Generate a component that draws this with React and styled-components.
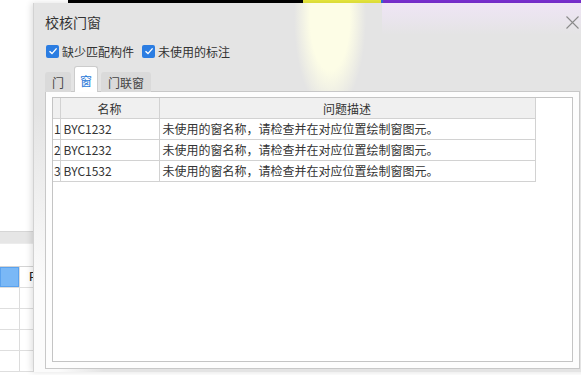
import styled, { createGlobalStyle } from "styled-components";

const GlobalStyle = createGlobalStyle`
  html, body {
    margin: 0;
    padding: 0;
    background: #ffffff;
  }
  body {
    font-family: "Noto Sans CJK SC", "Noto Sans", sans-serif;
    color: #333;
  }
`;

const Desktop = styled.div`
  position: relative;
  width: 581px;
  height: 375px;
  overflow: hidden;
  background: #fff;
`;

// 背景中的应用程序（被对话框遮住）
const TopStrip = styled.div`
  display: flex;
  height: 3px;
`;

const StripPart = styled.div`
  width: ${(p) => p.w}px;
  flex: ${(p) => (p.w ? "none" : 1)};
  background: ${(p) => p.color};
`;

const BgApp = styled.div`
  margin-top: 228px;
  border-top: 1px solid #d6d6d6;
`;

const BgBand = styled.div`
  height: 11px;
  background: #e6e6e6;
  border-bottom: 1px solid #ececec;
`;

const BgBlank = styled.div`
  height: 22px;
  border-bottom: 1px solid #d4d4d4;
`;

const BgRow = styled.div`
  display: grid;
  grid-template-columns: 20px 1fr;
  height: 20px;
  border-bottom: 1px solid #dedede;
`;

const BgCell = styled.div`
  border-right: 1px solid #dcdcdc;
  background: ${(p) => (p.selected ? "#7ab8f6" : "transparent")};
  box-shadow: ${(p) => (p.selected ? "inset 0 0 0 1px #5aa2ee" : "none")};
  font-family: "Liberation Sans", sans-serif;
  font-size: 13px;
  line-height: 20px;
  padding-left: 9px;
  color: #222;
`;

// 对话框
const Dialog = styled.div`
  position: absolute;
  left: 33px;
  top: 3px;
  width: 558px;
  height: 369px;
  display: flex;
  flex-direction: column;
  border-left: 1px solid #d2d2d2;
  box-shadow: -2px 0 6px rgba(0, 0, 0, 0.12);
  background:
    radial-gradient(ellipse 36px 95px at 296px 15px, #fdfde6 55%, rgba(253, 253, 230, 0) 100%),
    linear-gradient(to bottom, #efe5f6, rgba(239, 229, 246, 0)) 348px 0 / 100% 32px no-repeat,
    radial-gradient(ellipse 70px 260px at 0 100%, #fbfbfb 35%, rgba(251, 251, 251, 0) 100%),
    #e4e4e4;
`;

const TitleBar = styled.div`
  height: 38px;
  display: flex;
  align-items: center;
  justify-content: space-between;
  padding: 0 13px 0 11px;
  flex: none;
`;

const Title = styled.span`
  font-size: 14px;
  color: #333;
`;

const CloseButton = styled.button`
  width: 13px;
  height: 13px;
  padding: 0;
  border: none;
  background: none;
  display: flex;
  cursor: pointer;
`;

const CheckRow = styled.div`
  height: 20px;
  display: flex;
  align-items: center;
  gap: 8px;
  padding-left: 12px;
  flex: none;
`;

const CheckLabel = styled.label`
  display: flex;
  align-items: center;
  gap: 3px;
  font-size: 12px;
  color: #333;
`;

const CheckBox = styled.span`
  width: 13px;
  height: 13px;
  border-radius: 2px;
  background: #2b7de2;
  display: flex;
  align-items: center;
  justify-content: center;
`;

const TabBar = styled.div`
  display: flex;
  align-items: flex-end;
  gap: 3px;
  padding-left: 11px;
  margin-top: 5px;
  height: 26px;
  flex: none;
  position: relative;
  z-index: 1;
  margin-bottom: -1px;
`;

const Tab = styled.div`
  height: ${(p) => (p.active ? 26 : 20)}px;
  padding: ${(p) => (p.active ? "1px 5px 0" : "0 7px")};
  box-sizing: border-box;
  display: flex;
  align-items: center;
  font-size: 12px;
  border-radius: 3px 3px 0 0;
  color: ${(p) => (p.active ? "#1f78d8" : "#444")};
  background: ${(p) => (p.active ? "#ffffff" : "#dadada")};
  border: ${(p) => (p.active ? "1px solid #cccccc" : "none")};
  border-bottom: none;
`;

const Panel = styled.div`
  flex: 1;
  margin: 0 12px 3px 11px;
  border: 1px solid #c8c8c8;
  background: #fdfdfd;
  padding: 5px 6px 6px 6px;
  display: flex;
`;

const Grid = styled.div`
  flex: 1;
  border: 1px solid #c4c4c4;
  background: #fff;
`;

const Table = styled.table`
  border-collapse: collapse;
  table-layout: fixed;
  width: 482px;
  font-size: 12px;
  color: #333;
`;

const HeadCell = styled.th`
  height: 20px;
  padding: 0;
  font-weight: normal;
  background: #f0f0f0;
  border-right: 1px solid #d2d2d2;
  border-bottom: 1px solid #d2d2d2;
  text-align: center;
  white-space: nowrap;
`;

const Cell = styled.td`
  height: 20px;
  padding: 0 0 0 ${(p) => (p.num ? 1 : 3)}px;
  border-right: 1px solid #d2d2d2;
  border-bottom: 1px solid #d2d2d2;
  white-space: nowrap;
  overflow: ${(p) => (p.num ? "visible" : "hidden")};
  line-height: 20px;
`;

const rows = [
  { id: 1, name: "BYC1232", desc: "未使用的窗名称，请检查并在对应位置绘制窗图元。" },
  { id: 2, name: "BYC1232", desc: "未使用的窗名称，请检查并在对应位置绘制窗图元。" },
  { id: 3, name: "BYC1532", desc: "未使用的窗名称，请检查并在对应位置绘制窗图元。" },
];

const Check = () => (
  <CheckBox>
    <svg width="10" height="10" viewBox="0 0 10 10">
      <path d="M1.5 5.2 L4 7.6 L8.6 2.4" fill="none" stroke="#fff" strokeWidth="1.4" />
    </svg>
  </CheckBox>
);

export default function App() {
  return (
    <Desktop>
      <GlobalStyle />
      <TopStrip>
        <StripPart w={68} color="#ffffff" />
        <StripPart w={235} color="#000000" />
        <StripPart w={78} color="#e8e83c" />
        <StripPart w={2} color="#2c6fd6" />
        <StripPart color="#7a2fd2" />
      </TopStrip>
      <BgApp>
        <BgBand />
        <BgBlank />
        <BgRow>
          <BgCell selected />
          <BgCell>P</BgCell>
        </BgRow>
        {[0, 1, 2, 3].map((i) => (
          <BgRow key={i}>
            <BgCell />
            <BgCell />
          </BgRow>
        ))}
      </BgApp>

      <Dialog>
        <TitleBar>
          <Title>校核门窗</Title>
          <CloseButton>
            <svg width="13" height="13" viewBox="0 0 13 13">
              <path d="M0.5 0.5 L12.5 12.5 M12.5 0.5 L0.5 12.5" stroke="#8a8a8a" strokeWidth="1.1" />
            </svg>
          </CloseButton>
        </TitleBar>
        <CheckRow>
          <CheckLabel>
            <Check />
            缺少匹配构件
          </CheckLabel>
          <CheckLabel>
            <Check />
            未使用的标注
          </CheckLabel>
        </CheckRow>
        <TabBar>
          <Tab>门</Tab>
          <Tab active>窗</Tab>
          <Tab>门联窗</Tab>
        </TabBar>
        <Panel>
          <Grid>
            <Table>
              <colgroup>
                <col style={{ width: 7 }} />
                <col style={{ width: 99 }} />
                <col style={{ width: 376 }} />
              </colgroup>
              <thead>
                <tr>
                  <HeadCell />
                  <HeadCell>名称</HeadCell>
                  <HeadCell>问题描述</HeadCell>
                </tr>
              </thead>
              <tbody>
                {rows.map((r) => (
                  <tr key={r.id}>
                    <Cell num>{r.id}</Cell>
                    <Cell>{r.name}</Cell>
                    <Cell>{r.desc}</Cell>
                  </tr>
                ))}
              </tbody>
            </Table>
          </Grid>
        </Panel>
      </Dialog>
    </Desktop>
  );
}
